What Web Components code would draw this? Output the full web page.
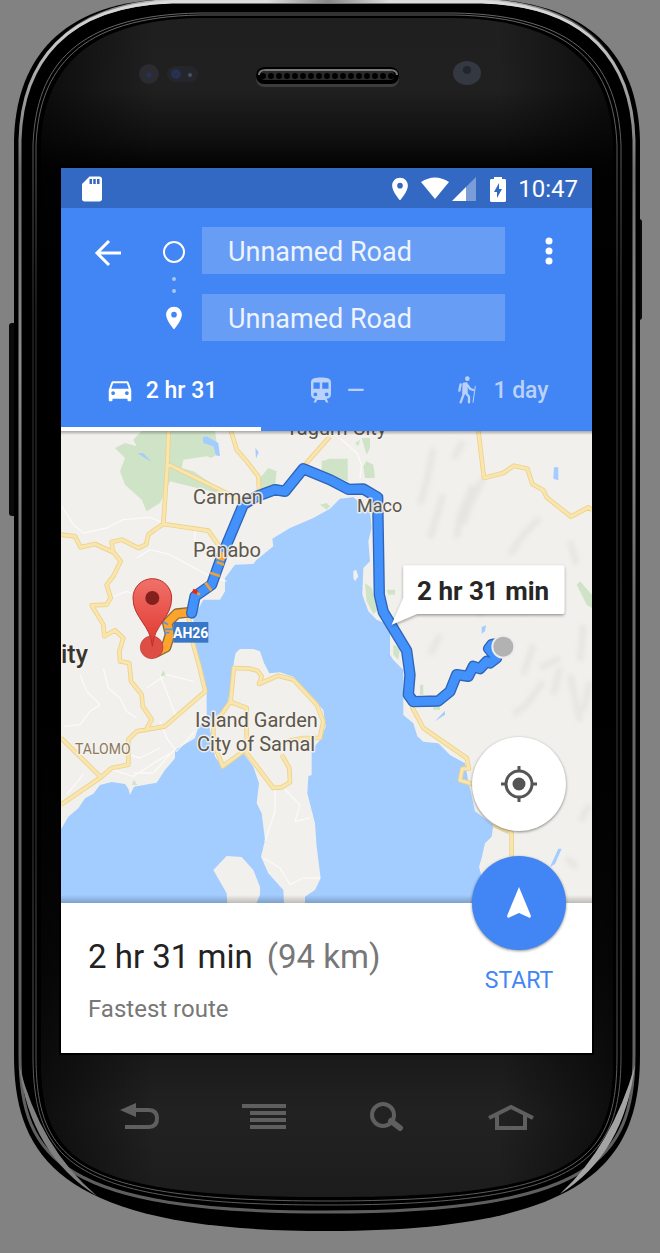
<!DOCTYPE html>
<html lang="en">
<head>
<meta charset="utf-8">
<meta name="viewport" content="width=device-width, initial-scale=1">
<title>Directions</title>
<style>
  body { margin: 0; background: #828282; font-family: Roboto, "Liberation Sans", sans-serif; }
</style>
</head>
<body>
<phone-device>
  <status-bar></status-bar>
  <directions-header></directions-header>
  <route-map></route-map>
  <trip-panel time="2 hr 31 min" distance="(94 km)" note="Fastest route"></trip-panel>
</phone-device>

<template id="phone-device">
  <style>
    :host { display: block; position: relative; overflow: hidden; }
    .frame { position: absolute; inset: 0; width: 100%; height: 100%; }
    .body { position: relative; display: grid; grid-template-columns: 61px 1fr 68px; grid-template-rows: 168px auto 128px; padding-bottom: 72px; }
    main { grid-column: 2; grid-row: 2; background: #fff; min-width: 0; }
    nav { grid-column: 1 / -1; grid-row: 3; display: grid; grid-template-columns: repeat(4, 1fr); padding: 0 87px 0 78px; place-items: center; }
    button { border: 0; background: none; padding: 8px; color: #5f5f5f; display: flex; }
  </style>
  <svg class="frame" viewBox="0 0 660 1253" preserveAspectRatio="none" aria-hidden="true">
    <defs>
      <linearGradient id="face" x1="0" y1="0" x2="0" y2="1">
        <stop offset="0" stop-color="#1f1f1f"/><stop offset=".06" stop-color="#202020"/>
        <stop offset=".1" stop-color="#111"/><stop offset=".125" stop-color="#040404"/><stop offset=".2" stop-color="#000"/>
        <stop offset=".6" stop-color="#000"/><stop offset=".8" stop-color="#0c0c0c"/><stop offset=".88" stop-color="#1a1a1a"/>
        <stop offset=".93" stop-color="#222"/><stop offset="1" stop-color="#1c1c1c"/>
      </linearGradient>
      <linearGradient id="sides" x1="0" x2="1" y1="0" y2="0">
        <stop offset="0" stop-color="#000" stop-opacity=".6"/><stop offset=".2" stop-color="#000" stop-opacity="0"/>
        <stop offset=".8" stop-color="#000" stop-opacity="0"/><stop offset="1" stop-color="#000" stop-opacity=".6"/>
      </linearGradient>
      <linearGradient id="rim" x1="0" x2="0" y1="0" y2="1">
        <stop offset="0" stop-color="#e8e8e8"/><stop offset=".06" stop-color="#a8a8a8"/><stop offset=".14" stop-color="#707070"/>
        <stop offset=".3" stop-color="#8c8c8c"/><stop offset=".5" stop-color="#6a6a6a"/><stop offset="1" stop-color="#5e5e5e"/>
      </linearGradient>
      <linearGradient id="groove" x1="0" x2="0" y1="0" y2="1">
        <stop offset="0" stop-color="#666"/><stop offset=".12" stop-color="#5c5c5c"/><stop offset=".25" stop-color="#333"/>
        <stop offset=".7" stop-color="#3c3c3c"/><stop offset=".9" stop-color="#5c5c5c"/><stop offset="1" stop-color="#5c5c5c"/>
      </linearGradient>
      <linearGradient id="top" x1="0" x2="1" y1="0" y2="0">
        <stop offset="0" stop-color="#bbb" stop-opacity=".1"/><stop offset=".25" stop-color="#ddd"/><stop offset=".4" stop-color="#ddd"/>
        <stop offset=".5" stop-color="#888"/><stop offset=".6" stop-color="#ddd"/><stop offset=".75" stop-color="#ddd"/><stop offset="1" stop-color="#bbb" stop-opacity=".1"/>
      </linearGradient>
      <pattern id="mesh" width="8" height="16" patternUnits="userSpaceOnUse" x="259" y="68"><rect width="8" height="16" fill="#2b2b2b"/><circle cx="4" cy="8" r="3" fill="#000"/></pattern>
    </defs>
    <rect x="9" y="323" width="9" height="193" rx="3" fill="#0a0a0a"/>
    <rect x="635" y="219" width="7" height="101" rx="3" fill="#0a0a0a"/>
    <path fill="#000" d="M14 140C16 60 60 2 170-1H484C594 2 638 60 640 140V1055C640 1160 590 1231 327 1231S14 1160 14 1055Z"/>
    <path fill="none" stroke="url(#rim)" stroke-width="3" d="M20 140C22 64 64 5 172 2H482C590 5 632 64 634 140V1055C634 1160 590 1212 327 1212S20 1160 20 1055Z"/>
    <path fill="url(#top)" d="M22 120C32 48 76 2 172-1H482C580 2 624 48 634 120C619 52 582 8 482 3H172C72 8 36 52 22 120Z"/>
    <path fill="#808080" d="M19 1065Q30 1154 97 1196Q40 1148 19 1065Z"/>
    <path fill="#a4a4a4" d="M635 1065Q624 1154 560 1194Q612 1146 635 1065Z"/>
    <path fill="none" stroke="url(#groove)" d="M33 145C36 66 76 15 200 13H454C578 15 618 66 621 145V1055C621 1162 582 1205 327 1205S33 1162 33 1055Z"/>
    <path fill="#000" stroke="url(#groove)" d="M36 145C39 69 79 17 200 15H454C575 17 614 69 617 145V1055C617 1160 582 1201 327 1201S36 1160 36 1055Z"/>
    <path fill="url(#face)" d="M41 145C44 72 83 20 200 18H454C571 20 610 72 613 145V1055C613 1160 579 1197 327 1197S41 1160 41 1055Z"/>
    <path fill="url(#sides)" d="M41 145C44 72 83 20 200 18H454C571 20 610 72 613 145V1055C613 1160 579 1197 327 1197S41 1160 41 1055Z"/>
    <circle cx="149" cy="74" r="10" fill="#2b2b30"/><circle cx="149" cy="75" r="3" fill="#273050"/>
    <rect x="167" y="66" width="31" height="16" rx="8" fill="#25262c"/><circle cx="176" cy="74" r="5" fill="#27304f"/><circle cx="190" cy="75" r="2" fill="#48506a"/>
    <rect x="256" y="67" width="143" height="20" rx="8" fill="#3c3c3c"/><rect x="256" y="67" width="143" height="17" rx="8" fill="#000"/>
    <path d="M259 75Q259 70 266 70H390Q397 70 397 75" fill="none" stroke="#777" stroke-width="2"/><rect x="261" y="71" width="133" height="9" rx="4" fill="url(#mesh)"/>
    <ellipse cx="467" cy="73" rx="14" ry="12" fill="#343941"/><circle cx="467" cy="70" r="4" fill="#22252b"/>
    <rect x="59" y="166" width="535" height="889" fill="#000"/>
  </svg>
  <div class="body">
    <main><slot></slot></main>
    <nav aria-label="Phone keys">
      <button aria-label="Back"><svg width="40" height="28" viewBox="0 0 40 28"><path d="M0 7 16 0V14Z" fill="currentColor"/><path d="M10 7H29Q37 7 37 15.500T29 24H5" fill="none" stroke="currentColor" stroke-width="4"/></svg></button>
      <button aria-label="Menu"><svg width="44" height="26" viewBox="0 0 44 26" fill="currentColor"><path d="M0 0H44V4H0ZM8 7H44V11H8ZM8 14H44V18H8ZM8 21H44V25H8Z"/></svg></button>
      <button aria-label="Search"><svg width="34" height="30" viewBox="0 0 34 30" fill="none" stroke="currentColor"><circle cx="13" cy="13" r="11" stroke-width="4"/><path d="m21 19 9 7" stroke-width="6" stroke-linecap="round"/></svg></button>
      <button aria-label="Home"><svg width="46" height="28" viewBox="0 0 46 28" fill="none" stroke="currentColor" stroke-width="4"><path d="M1 15 23 4 45 15" /><path d="M9 12V25H37V12"/></svg></button>
    </nav>
  </div>
</template>

<template id="status-bar">
  <style>
    :host { display: flex; align-items: center; height: 40px; box-sizing: border-box; padding: 2px 14px 0 16px; background: #3469c3; color: #fff; font-size: 24px; line-height: 38px; }
    svg { display: block; flex: none; }
    .sd { margin-right: auto; }
    .pin { margin-right: 12px; } .wifi { margin-right: 3px; } .signal { margin-right: 14px; } .battery { margin-right: 12px; }
  </style>
  <svg class="sd" width="30" height="30" viewBox="0 0 24 24" fill="#fff"><path d="M18 2h-8L4.020 8 4 20c0 1.100.9 2 2 2h12c1.100 0 2-.9 2-2V4c0-1.100-.9-2-2-2zm-6 6h-2V4h2zm3 0h-2V4h2zm3 0h-2V4h2z"/></svg>
  <svg class="pin" width="18" height="24" viewBox="4 2 16 20" fill="#fff"><path d="M12 2C8.130 2 5 5.130 5 9c0 5.250 7 13 7 13s7-7.750 7-13c0-3.870-3.130-7-7-7zm0 9.500a2.500 2.500 0 010-5 2.500 2.500 0 010 5z"/></svg>
  <svg class="wifi" width="28" height="24" viewBox="0 0 28 24" fill="#fff"><path d="M0 5Q14-4 28 5L14 22Z"/></svg>
  <svg class="signal" width="24" height="24" viewBox="0 0 24 24" fill="#fff"><path opacity=".35" d="M24 0V24H14V10Z"/><path d="M0 24 14 10V24Z"/></svg>
  <svg class="battery" width="16" height="25" viewBox="0 0 16 25" fill="#fff" fill-rule="evenodd"><path d="M4 0H12V2H15L16 3V24L15 25H1L0 24V3L1 2H4ZM9 6 4 15H7V21L12 12H9Z"/></svg>
  <span>10:47</span>
</template>

<template id="directions-header">
  <style>
    :host { display: block; background: #4285f4; color: #fff; }
    .fields { display: grid; grid-template-columns: 93px 40px 1fr 87px; grid-template-rows: 47px 20px 47px; place-items: center; padding-top: 19px; }
    button { font: inherit; color: inherit; border: 0; background: none; padding: 0; display: flex; align-items: center; justify-content: center; }
    .back { padding-top: 4px; }
    input { box-sizing: border-box; justify-self: stretch; align-self: stretch; width: auto; min-width: 0; margin: 0 0 0 8px; padding: 2px 24px 0 26px; border: 0; border-radius: 0; background: #689df6; color: #eef3fe; font: 27px Roboto, "Liberation Sans", sans-serif; outline: 0; }
    .from { grid-column: 3; grid-row: 1; } .to { grid-column: 3; grid-row: 3; }
    .menu { grid-column: 4; grid-row: 1; }
    .via { grid-column: 2; grid-row: 2; } .dest { grid-column: 2; grid-row: 3; }
    .tabs { display: grid; grid-template-columns: 200fr 148fr 183fr; margin-top: 8px; height: 82px; font-size: 23px; font-weight: 500; }
    .tabs button { gap: 11px; border: solid transparent; border-width: 4px 0; color: #b9d1fb; }
    .tabs button[aria-selected="true"] { color: #fff; border-bottom-color: #fff; }
    svg { display: block; flex: none; }
  </style>
  <div class="fields">
    <button class="back" aria-label="Back"><svg width="28" height="28" viewBox="0 0 28 28" fill="none" stroke="#fff" stroke-width="3"><path d="M27 14H3M15 2 3 14 15 26"/></svg></button>
    <svg width="24" height="24" viewBox="0 0 24 24"><circle cx="12" cy="13" r="10" fill="none" stroke="#fff" stroke-width="2"/></svg>
    <input class="from" aria-label="Start" value="Unnamed Road">
    <button class="menu" aria-label="More options"><svg width="8" height="28" viewBox="0 0 8 28" fill="#fff"><circle cx="4" cy="4" r="3.500"/><circle cx="4" cy="14" r="3.500"/><circle cx="4" cy="24" r="3.500"/></svg></button>
    <svg class="via" width="4" height="18" viewBox="0 0 4 18" fill="#a9c7fa"><circle cx="2" cy="4" r="2"/><circle cx="2" cy="16" r="2"/></svg>
    <svg class="dest" width="18" height="24" viewBox="4 2 16 20" fill="#fff"><path d="M12 2C8.130 2 5 5.130 5 9c0 5.250 7 13 7 13s7-7.750 7-13c0-3.870-3.130-7-7-7zm0 9.500a2.500 2.500 0 010-5 2.500 2.500 0 010 5z"/></svg>
    <input class="to" aria-label="Destination" value="Unnamed Road">
  </div>
  <div class="tabs" role="tablist">
    <button role="tab" aria-selected="true"><svg width="30" height="30" viewBox="0 0 24 24" fill="currentColor"><path d="M18.920 6.010C18.720 5.420 18.160 5 17.500 5h-11c-.66 0-1.210.42-1.420 1.010L3 12v8c0 .55.45 1 1 1h1c.55 0 1-.45 1-1v-1h12v1c0 .55.45 1 1 1h1c.55 0 1-.45 1-1v-8l-2.080-5.990zM6.500 16c-.83 0-1.500-.67-1.500-1.500S5.670 13 6.500 13s1.500.67 1.500 1.500S7.330 16 6.500 16zm11 0c-.83 0-1.500-.67-1.500-1.500s.67-1.500 1.500-1.500 1.500.67 1.500 1.500-.67 1.500-1.500 1.500zM5 11l1.500-4.500h11L19 11H5z"/></svg><span>2 hr 31</span></button>
    <button role="tab" aria-selected="false"><svg width="30" height="30" viewBox="0 0 24 24" fill="currentColor"><path d="M12 2c-4.420 0-8 .5-8 4v9.500C4 17.430 5.570 19 7.500 19L6 22h2l1-2h6l1 2h2l-1.500-3c1.930 0 3.500-1.570 3.500-3.500V6c0-3.500-3.580-4-8-4zM7.500 17a1.500 1.500 0 110-3 1.500 1.500 0 010 3zm3.500-6H6V6h5zm5.500 6a1.500 1.500 0 110-3 1.500 1.500 0 010 3zm1.500-6h-5V6h5z"/></svg><span>—</span></button>
    <button role="tab" aria-selected="false"><svg width="30" height="30" viewBox="368 629 90 90" fill="currentColor" stroke="currentColor" stroke-linecap="round" stroke-linejoin="round"><circle cx="414" cy="640" r="7" stroke="none"/><path d="M402 655 412 653 413 682 401 684Z" stroke-width="5"/><path d="M390 676 394 657" fill="none" stroke-width="7"/><path d="M404 684 394 711M409 682 419 694V711M413 658 423 671 432 674" fill="none" stroke-width="7"/><path d="M438 663 431 711" stroke-width="3"/></svg><span>1 day</span></button>
  </div>
</template>

<template id="route-map">
  <style>
    :host { display: block; position: relative; height: 472px; overflow: hidden; background: #f2f0ec; }
    .map { display: block; width: 100%; height: 100%; }
    :host::after { content: ""; position: absolute; inset: auto 0 0; height: 8px; background: linear-gradient(transparent, rgba(0,0,0,.22)); }
    button { position: absolute; right: 26px; bottom: 72px; width: 94px; height: 94px; border: 0; border-radius: 50%; background: #fff; display: grid; place-items: center; padding: 0; box-shadow: 0 1px 3px rgba(0,0,0,.45); }
    text { font-family: Roboto, "Liberation Sans", sans-serif; fill: #5d574d; stroke: #f5f3ef; stroke-width: 3px; stroke-opacity: .85; paint-order: stroke; font-size: 20px; stroke-linejoin: round; }
  </style>
  <svg class="map" viewBox="0 0 531 472" preserveAspectRatio="xMidYMid slice" role="img" aria-label="Map of the route">
    <defs>
      <linearGradient id="pin" x1="0" y1="0" x2="0" y2="1"><stop offset="0" stop-color="#f0716a"/><stop offset="1" stop-color="#e0372e"/></linearGradient>
      <linearGradient id="shade" x1="0" y1="0" x2="0" y2="1"><stop offset="0" stop-opacity=".3"/><stop offset="1" stop-opacity="0"/></linearGradient>
      <filter id="soft" x="-20%" y="-20%" width="140%" height="140%"><feGaussianBlur stdDeviation="8"/></filter>
      <filter id="drop" x="-10%" y="-10%" width="120%" height="130%"><feDropShadow dx="0" dy="4" stdDeviation="4" flood-opacity=".4"/></filter>
    </defs>
    <g transform="scale(.33333) translate(-3 -9)" stroke-linejoin="round">
      <g fill="none" stroke="#dedcd8" stroke-width="18" filter="url(#soft)" opacity=".55">
        <path d="M1120 60 1100 160 1080 230M1210 40 1180 90M1240 170 1200 260 1190 330M1270 150 1225 240 1210 290M1440 270 1390 320 1350 380M1150 200 1110 330M1530 340 1550 410M1320 520 1250 560M1390 560 1440 500M1140 620 1110 680M1570 590 1560 700M1500 720 1480 800M1530 740 1560 880M1450 760 1400 830 1360 860M1590 760 1570 850M1500 690 1440 720M1560 1180 1590 1130M1520 1290 1550 1320M1420 650 1390 740M735 1010 725 1100M730 1210 705 1260"/>
      </g>
      <g fill="#cfe3c7">
        <path d="M245 9H465L475 75 455 90 440 85 370 95 365 120 400 130 460 170 475 195 410 180 330 160 300 225 260 250 245 215 195 170 180 130 195 90 165 60 195 45 230 55 220 35Z"/>
        <path d="M600 150 625 120 650 130 645 175 605 185ZM785 100 810 92H863V160L785 135ZM910 115 920 100 940 110 945 150 915 150ZM780 230 800 225 810 235 800 245ZM915 465 935 480 955 545 940 558 920 520ZM980 485H1005V500H985ZM1550 470 1560 460 1596 500V540L1580 530ZM1000 650 1020 660 1015 695 1000 680ZM1080 770H1090V800H1080ZM1120 836H1140V845H1120ZM302 745 310 727 320 747ZM215 1070 222 1055 232 1072ZM885 45 900 35 895 55ZM905 30H930V60L920 80Z"/>
      </g>
      <g fill="#a3ccff">
        <path d="M3 1425V1204L25 1166 55 1141 75 1111 100 1097 120 1071 155 1062 195 1068 205 1082 210 1101 222 1076 290 1064 315 1026 345 991V966L405 931 415 896 440 876V786L430 740 410 690 402 640 400 570 430 515H480L495 490V450L525 410 580 408 590 395 640 355 637 332 690 300 760 270 810 242 840 212 880 208 930 250 935 300 925 340 930 400 910 420 907 500 925 550 950 575 990 592V680L1000 696 1030 726V861L1060 886 1072 925 1090 941 1135 946 1170 981 1215 1006 1225 1060 1245 1150 1300 1191 1295 1226 1275 1246 1265 1290 1257 1316 1265 1346 1250 1425Z"/>
        <path d="M428 28 440 25 475 45 480 85 468 82 460 55 430 45ZM232 75 250 76 275 102 255 90ZM586 60 596 72 588 92ZM1482 118H1495V157L1480 152ZM1265 597 1278 592 1275 610 1265 617ZM1125 880 1155 848V860ZM1470 1317 1495 1262H1505L1485 1308Z"/>
      </g>
      <g fill="#f2f0ec">
        <path d="M522 700 527 675 540 663H580L600 670 612 705 628 736 660 733 700 746 790 846 797 896 780 936 755 966V1041L745 1045 742 1096 765 1186 770 1256 782 1351 765 1386 735 1406V1425H672L670 1386 625 1336 603 1286 615 1236 605 1156 590 1126 597 1066 580 1016 550 976 490 1021 465 986 448 896 455 876 500 836 515 766Z"/>
        <path d="M460 1326 500 1284 545 1287 580 1326 600 1376V1400L590 1425H502L500 1396ZM880 430 888 425 895 445 885 460 880 450Z"/>
      </g>
      <g fill="none" stroke="#fff" stroke-width="4" opacity=".65">
        <path d="M5 235 40 290 70 315 140 300 190 275 270 268 310 285M405 300V370M230 390 270 365 330 380 440 440 500 460M150 510 200 490 230 500M840 30 890 75 905 110 900 150M60 740 80 790 120 830 90 850 60 890 10 895M130 720 145 780 180 810 200 850 230 870M260 780 320 740 400 760M300 880 320 930 350 970 405 910M155 1025 220 1045 290 1000 350 965M20 1100 70 1040M645 1085V1150L615 1240M675 1085 720 1130 705 1180 750 1170M610 1290 660 1320 690 1370 730 1350 780 1350M350 870 300 740M190 975 240 990 300 960M220 1035H280L330 980"/>
      </g>
      <g fill="none">
        <g stroke="#edd28a" stroke-width="14">
          <path id="r" d="M326 9 322 110 310 288 285 305 265 320 258 350 235 360 185 335 155 342 158 370 182 400 160 445 140 470 152 510 140 530 95 532 130 590 133 625 165 607 190 630 178 670 180 700 208 705 213 760 245 800 248 835 275 875 258 905M3 320 45 325 62 358 105 348 165 375M322 108 500 195 560 225M513 9 530 65 560 100 595 145 598 200M735 110 810 25M310 288 445 308 485 365M385 560 400 650 418 715 436 790 315 895 230 910 205 935V1010L155 1020 120 1050 3 1130M3 930 120 1045M1255 9 1272 150 1330 135 1362 113 1402 122 1417 168 1450 187 1460 208 1533 266 1585 238 1596 245M522 720 570 722 592 728 605 745 597 768 655 743 700 755 770 830 790 880 780 930 730 930 680 940M522 715 512 820 480 865 460 890V940L488 1015 550 970M512 822 560 840V975L640 1080 665 1078 690 1063 688 1020 665 980M1055 835 1090 900 1220 990 1227 1022H1207L1200 1057 1245 1070M1300 1190 1355 1215V1300"/>
        </g>
        <use href="#r" stroke="#f9e5ae" stroke-width="9"/>
      </g>
      <g fill="none" stroke-linecap="round">
        <g>
          <path d="M290 672 318 658 330 620 322 585 350 557 395 552" stroke="#8d6a3b" stroke-width="32"/>
          <path d="M290 672 318 658 330 620 322 585 350 557 395 552" stroke="#fca42c" stroke-width="24"/>
          <path d="M395 555 405 505 455 470 485 385 550 230 590 205 645 185 675 190 730 122 810 155 865 184 910 183 953 208 958 500 970 552 1040 668 1050 740 1045 800 1060 821 1135 819 1170 790 1190 740 1225 745 1240 715 1260 722 1280 700 1290 705 1310 690 1286 662 1295 650 1320 645" stroke="#2f64b8" stroke-width="34"/>
          <path d="M395 555 405 505 455 470 485 385 550 230 590 205 645 185 675 190 730 122 810 155 865 184 910 183 953 208 958 500 970 552 1040 668 1050 740 1045 800 1060 821 1135 819 1170 790 1190 740 1225 745 1240 715 1260 722 1280 700 1290 705 1310 690 1286 662 1295 650 1320 645" stroke="#4391fb" stroke-width="26"/>
        </g>
        <g stroke-linecap="butt">
          <path d="M480 396 488 372" stroke="#fca42c" stroke-width="25"/>
          <path d="M470 402 492 410M450 434 480 444M436 464 454 488M400 490 420 500" stroke="#e9a13c" stroke-width="8"/>
          <path d="M398 488 412 494" stroke="#e02b20" stroke-width="12"/>
          <path d="M308 580 324 590M314 604H342M312 614H328" stroke="#4f96e8" stroke-width="5"/>
        </g>
      </g>
      <rect x="340" y="582" width="105" height="62" fill="#3877c6"/>
      <circle cx="275" cy="658" r="34" fill="#de4e44" stroke="#b73a33" stroke-width="2"/>
      <path d="M277 655C272 590 219 570 219 510A58 58 0 01335 510C335 570 282 590 277 655Z" fill="url(#pin)" stroke="#b8322b" stroke-width="3"/>
      <circle cx="277" cy="510" r="21" fill="#84201b"/>
      <circle cx="1330" cy="656" r="33" fill="#b2b2b2" stroke="#ececec" stroke-width="6"/>
      <path d="M1036 412H1507Q1513 412 1513 418V552Q1513 558 1507 558H1070L995 590 1030 510V418Q1030 412 1036 412Z" fill="#fff" filter="url(#drop)"/>
    </g>
    <text x="225" y="4">Tagum City</text>
    <text x="132" y="73">Carmen</text>
    <text x="132" y="126">Panabo</text>
    <text x="296" y="81" style="font-size:18px">Maco</text>
    <text x="134" y="296">Island Garden</text>
    <text x="136" y="320">City of Samal</text>
    <text x="14" y="323" style="font-size:14px;fill:#8b7a60">TALOMO</text>
    <text x="0" y="232" style="font-size:25px;font-weight:500;fill:#38342e">ity</text>
    <text x="112" y="207" style="font-size:14px;font-weight:700;fill:#fff;stroke:none">AH26</text>
    <text x="356" y="169" style="font-size:26px;font-weight:700;fill:#262626;stroke:none">2 hr 31 min</text>
    <rect width="531" height="4" fill="url(#shade)"/>
  </svg>
  <button aria-label="My location"><svg width="38" height="38" viewBox="0 0 38 38" fill="none" stroke="#555" stroke-width="3"><circle cx="19" cy="19" r="13"/><circle cx="19" cy="19" r="6.500" fill="#555" stroke="none"/><path d="M19 1V7M19 31V37M1 19H7M31 19H37"/></svg></button>
</template>

<template id="trip-panel">
  <style>
    :host { display: flex; position: relative; justify-content: space-between; padding: 34px 26px 30px 27px; background: #fff; color: #777; }
    h1 { margin: 0 0 18px; font-size: 33px; line-height: 40px; font-weight: 400; display: flex; flex-wrap: wrap; gap: 14px; }
    .time { color: #222; }
    p { margin: 0; font-size: 24px; line-height: 28px; }
    .start { width: 94px; border: 0; background: none; padding: 28px 0 0; display: flex; flex-direction: column; color: #4285f4; font: 23px/32px Roboto, "Liberation Sans", sans-serif; align-items: center; }
    .disc { position: absolute; top: -47px; right: 26px; width: 94px; height: 94px; border-radius: 50%; background: #4285f4; display: grid; place-items: center; box-shadow: 0 1px 3px rgba(0,0,0,.45); }
  </style>
  <div>
    <h1><span class="time"></span><span class="distance"></span></h1>
    <p></p>
  </div>
  <button class="start"><span class="disc"><svg width="24" height="32" viewBox="0 0 24 32" fill="#fff"><path d="M12 0 24 29 23 31 12 26 1 31 0 29Z"/></svg></span>START</button>
</template>

<script>
  class TemplateElement extends HTMLElement {
    constructor() {
      super();
      this.attachShadow({ mode: "open" }).append(
        document.getElementById(this.localName).content.cloneNode(true));
    }
  }
  customElements.define("phone-device", class extends TemplateElement {});
  customElements.define("status-bar", class extends TemplateElement {});
  customElements.define("directions-header", class extends TemplateElement {});
  customElements.define("route-map", class extends TemplateElement {});
  customElements.define("trip-panel", class extends TemplateElement {
    connectedCallback() {
      this.shadowRoot.querySelector(".time").textContent = this.getAttribute("time");
      this.shadowRoot.querySelector(".distance").textContent = this.getAttribute("distance");
      this.shadowRoot.querySelector("p").textContent = this.getAttribute("note");
    }
  });
</script>
</body>
</html>
